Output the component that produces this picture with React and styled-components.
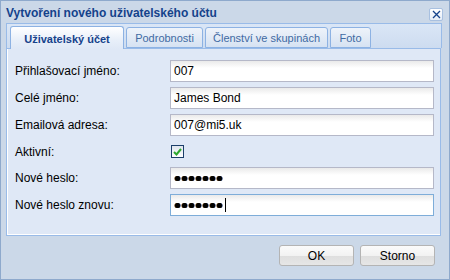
import React from "react";
import styled, { createGlobalStyle } from "styled-components";

const Global = createGlobalStyle`
  html, body { margin: 0; padding: 0; background: #cbd8e8; }
  body { font-family: "Liberation Sans", Arial, sans-serif; }
`;

const Win = styled.div`
  box-sizing: border-box;
  width: 450px;
  height: 280px;
  border: 1px solid #8ea9cc;
  background: #cbd8e8;
  display: flex;
  flex-direction: column;
  padding: 0 6px 0 5px;
`;

const Header = styled.div`
  height: 22px;
  display: flex;
  align-items: center;
  justify-content: space-between;
`;

const Title = styled.div`
  font: bold 12px "Liberation Sans", Arial, sans-serif;
  color: #15428b;
  padding-top: 2px;
`;

const CloseTool = styled.div`
  box-sizing: border-box;
  width: 14px;
  height: 13px;
  margin-top: 4px;
  border: 1px solid #a8c0e0;
  border-radius: 2px;
  background: linear-gradient(#ffffff, #e4ecf7);
  display: flex;
  align-items: center;
  justify-content: center;
`;

const Strip = styled.div`
  box-sizing: border-box;
  height: 25px;
  border: 1px solid #99bbe8;
  border-bottom: none;
  background: linear-gradient(#dae6f6, #cddcf0);
  display: flex;
  align-items: flex-end;
  padding-left: 3px;
  gap: 2px;
  margin-right: 1px;
`;

const Tab = styled.div`
  box-sizing: border-box;
  width: ${(p) => p.$w}px;
  height: ${(p) => (p.$active ? 23 : 21)}px;
  margin-bottom: ${(p) => (p.$active ? -1 : 0)}px;
  border: 1px solid #8db2e3;
  border-bottom: ${(p) => (p.$active ? "none" : "1px solid #8db2e3")};
  border-radius: 3px 3px 0 0;
  background: ${(p) =>
    p.$active
      ? "linear-gradient(#ffffff, #e8eff9 60%, #dfe8f6)"
      : "linear-gradient(#eef3fa, #d6e2f2)"};
  color: ${(p) => (p.$active ? "#15428b" : "#416aa3")};
  font: ${(p) => (p.$active ? "bold" : "normal")} 11px "Liberation Sans", Arial, sans-serif;
  display: flex;
  align-items: center;
  justify-content: center;
  padding-top: ${(p) => (p.$active ? 1 : 0)}px;
  position: relative;
  z-index: ${(p) => (p.$active ? 1 : 0)};
`;

const Body = styled.div`
  box-sizing: border-box;
  height: 188px;
  margin-right: 2px;
  border: 1px solid #99bbe8;
  box-shadow: inset 1px 0 0 #ffffff, inset 0 -1px 0 #ffffff;
  background: #dfe8f6;
  padding: 11px 6px 0 8px;
  display: flex;
  flex-direction: column;
  gap: 5px;
`;

const Row = styled.div`
  display: grid;
  grid-template-columns: 155px 1fr;
  align-items: center;
  height: ${(p) => p.$h || 22}px;
`;

const Label = styled.div`
  font: 12px "Liberation Sans", Arial, sans-serif;
  color: #000;
`;

const Field = styled.div`
  box-sizing: border-box;
  height: 22px;
  border: 1px solid ${(p) => (p.$focus ? "#7eadd9" : "#b5b8c8")};
  background: linear-gradient(#eaeaea, #ffffff 7px, #ffffff);
  font: 12px "Liberation Sans", Arial, sans-serif;
  color: #000;
  padding: 0 3px;
  display: flex;
  align-items: center;
`;

const Dots = styled.div`
  display: flex;
  gap: 2px;
  padding-left: 1px;
  align-items: center;
`;

const Dot = styled.span`
  width: 5px;
  height: 5px;
  border-radius: 50%;
  background: #000;
  box-shadow: -0.6px 0 0 #6a3a00, 0.6px 0 0 #0a2a6a;
`;

const Caret = styled.span`
  width: 1px;
  height: 14px;
  background: #000;
  margin-left: 1px;
`;

const Check = styled.div`
  box-sizing: border-box;
  width: 13px;
  height: 13px;
  margin-left: 1px;
  border: 1px solid #1c3f6a;
  background: linear-gradient(#e0e6ee, #ffffff);
  display: flex;
  align-items: center;
  justify-content: center;
`;

const Footer = styled.div`
  flex: 1;
  display: flex;
  justify-content: flex-end;
  align-items: flex-start;
  gap: 6px;
  padding: 9px 8px 0 0;
`;

const Button = styled.div`
  box-sizing: border-box;
  width: 75px;
  height: 21px;
  border: 1px solid #b4b4b4;
  border-radius: 3px;
  background: linear-gradient(#fbfbfb, #f2f2f2 50%, #dedede 51%, #e6e6e6);
  font: 12px "Liberation Sans", Arial, sans-serif;
  color: #000;
  display: flex;
  align-items: center;
  justify-content: center;
`;

const PasswordDots = ({ caret }) => (
  <Dots>
    {Array.from({ length: 7 }).map((_, i) => (
      <Dot key={i} />
    ))}
    {caret && <Caret />}
  </Dots>
);

export default function App() {
  return (
    <>
      <Global />
      <Win>
        <Header>
          <Title>Vytvoření nového uživatelského účtu</Title>
          <CloseTool>
            <svg width="9" height="9" viewBox="0 0 9 9">
              <path d="M1 1 L8 8 M8 1 L1 8" stroke="#15428b" strokeWidth="1.3" />
            </svg>
          </CloseTool>
        </Header>
        <Strip>
          <Tab $active $w={114}>Uživatelský účet</Tab>
          <Tab $w={77}>Podrobnosti</Tab>
          <Tab $w={123}>Členství ve skupinách</Tab>
          <Tab $w={41}>Foto</Tab>
        </Strip>
        <Body>
          <Row>
            <Label>Přihlašovací jméno:</Label>
            <Field>007</Field>
          </Row>
          <Row>
            <Label>Celé jméno:</Label>
            <Field>James Bond</Field>
          </Row>
          <Row>
            <Label>Emailová adresa:</Label>
            <Field>007@mi5.uk</Field>
          </Row>
          <Row $h={21}>
            <Label>Aktivní:</Label>
            <Check>
              <svg width="9" height="8" viewBox="0 0 9 8">
                <path d="M1 4 L3.5 6.5 L8 1" fill="none" stroke="#2ea82e" strokeWidth="2" />
              </svg>
            </Check>
          </Row>
          <Row>
            <Label>Nové heslo:</Label>
            <Field>
              <PasswordDots />
            </Field>
          </Row>
          <Row>
            <Label>Nové heslo znovu:</Label>
            <Field $focus>
              <PasswordDots caret />
            </Field>
          </Row>
        </Body>
        <Footer>
          <Button>OK</Button>
          <Button>Storno</Button>
        </Footer>
      </Win>
    </>
  );
}
